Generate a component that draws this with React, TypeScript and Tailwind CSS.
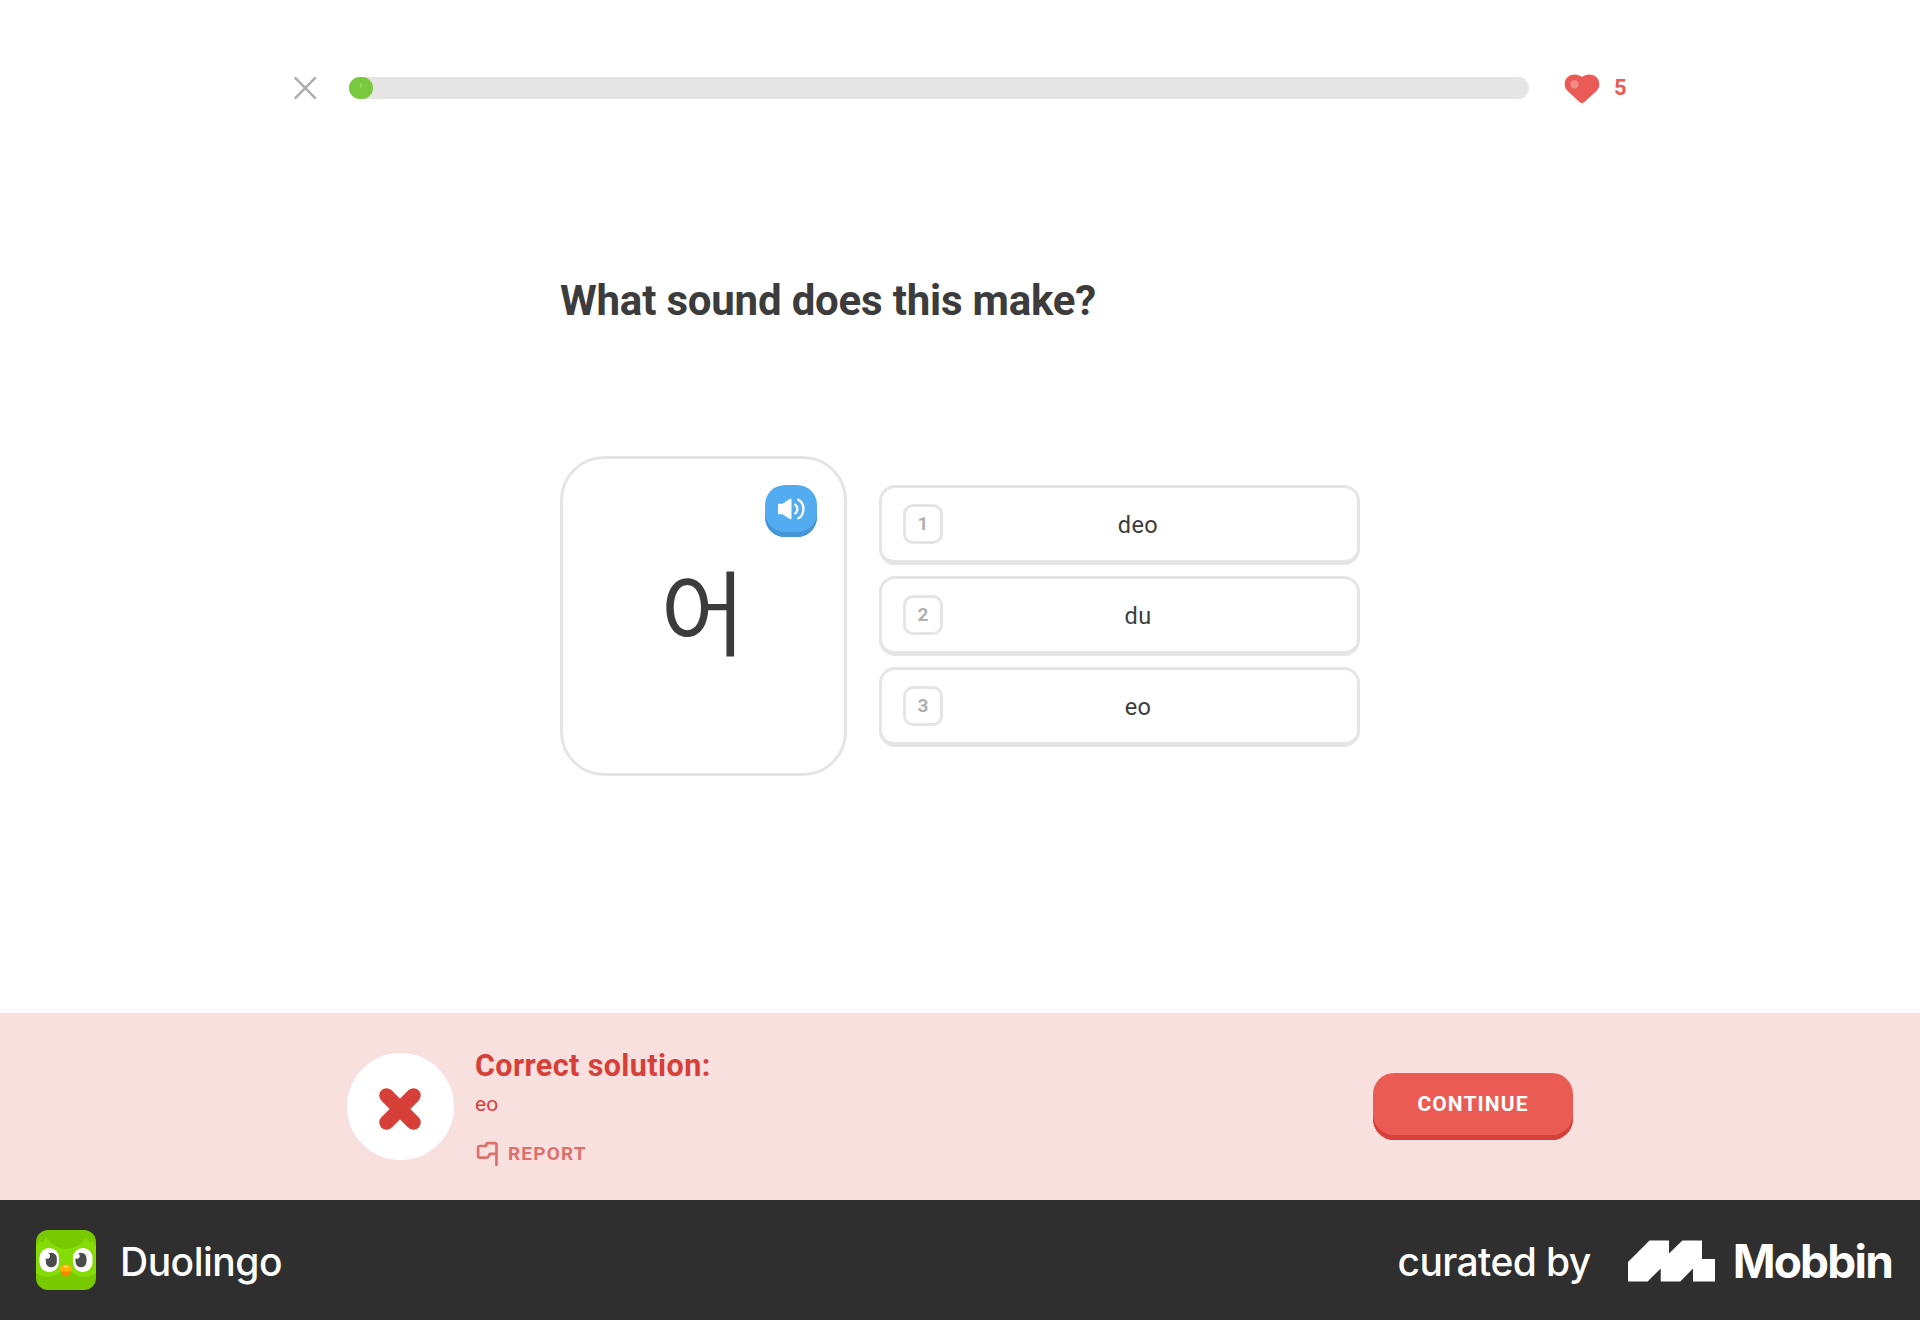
const OPTIONS = ["deo", "du", "eo"];

function CloseIcon() {
  return (
    <svg className="h-6 w-6" viewBox="0 0 24 24" fill="none" stroke="#afafaf" strokeWidth="2.6" strokeLinecap="round">
      <path d="M2.500 2.200 22 21.800M22 2.200 2.500 21.800" />
    </svg>
  );
}

function HeartIcon() {
  return (
    <svg className="mt-px h-[30px] w-9" viewBox="0 0 36 30">
      <path
        fill="#e95b54"
        d="M18 3C20 1.500 22.600.6 25.400.6 31 .6 35.300 4.600 35.300 10.200c0 2.800-1 4.900-2.900 6.700L20.800 27.700c-1.800 1.600-3.800 1.600-5.600 0L3.600 16.900C1.700 15.100.7 13 .7 10.200.7 4.600 5 .6 10.600.6 13.400.6 16 1.500 18 3Z"
      />
      <circle cx="10.400" cy="10.300" r="4.200" fill="#f08b85" />
    </svg>
  );
}

function SpeakerIcon() {
  return (
    <svg className="h-[22px] w-[27px]" viewBox="0 0 27 22" fill="none">
      <path
        fill="#fff"
        d="M1.300 5.700H4.600L11.800.9c.8-.5 1.700 0 1.700.9v18.400c0 .9-.9 1.400-1.700.9L4.600 16.300H1.300C.5 16.300 0 15.800 0 15V7c0-.8.5-1.300 1.300-1.300Z"
      />
      <path
        stroke="#fff"
        strokeWidth="2.300"
        strokeLinecap="round"
        d="M17.300 6.700c2.800 1.800 2.800 6.800 0 8.600M20.300 1.700c6.800 3.500 6.800 15.100 0 18.600"
      />
    </svg>
  );
}

function FlagIcon() {
  return (
    <svg className="h-[26px] w-[23px]" viewBox="0 0 23 26" fill="none" stroke="#dc706a" strokeWidth="2.700" strokeLinecap="round" strokeLinejoin="round">
      <path d="M20.500 24V3.800c0-1-.6-1.600-1.600-1.600H12c-1 0-1.600.5-1.800 1.400L9.900 5H3.700c-1 0-1.600.6-1.600 1.600V15c0 1 .6 1.600 1.600 1.600h7c.8 0 1.300-.3 1.700-1l1.400-2.700h6.700" />
    </svg>
  );
}

function OwlIcon() {
  return (
    <svg className="h-[60px] w-[60px]" viewBox="0 0 60 60">
      <defs>
        <clipPath id="tile">
          <rect width="60" height="60" rx="12" />
        </clipPath>
      </defs>
      <g clipPath="url(#tile)">
        <rect width="60" height="60" fill="#78c900" />
        <path
          fill="#85dc06"
          d="M0 14l2 1 1-5 3 3 4-6c4 6 9 11 20 12C41 18 46 13 50 7l4 6 3-3 1 5 2-1v29c-8 6-19 4-24-1h-12c-5 5-16 7-24 1Z"
        />
        <rect x="3.500" y="18" width="19.500" height="24" rx="9.750" fill="#fff" />
        <rect x="37" y="18" width="19.500" height="24" rx="9.750" fill="#fff" />
        <rect x="9.800" y="22.700" width="11" height="14.600" rx="5.500" fill="#4b4b4b" />
        <rect x="39.500" y="22.700" width="11" height="14.600" rx="5.500" fill="#4b4b4b" />
        <circle cx="11.300" cy="26" r="2.700" fill="#fff" />
        <circle cx="41" cy="26" r="2.700" fill="#fff" />
        <path fill="#f18a00" d="M24.800 40.500h10c0 3.500-2 6-5 6s-5-2.500-5-6Z" />
        <path fill="#ffb100" d="M29.800 34.500c3 0 6.300 2.500 6.300 4.900 0 1.700-2.500 2.100-6.300 2.100s-6.300-.4-6.300-2.100c0-2.400 3.300-4.900 6.300-4.900Z" />
        <ellipse cx="29.800" cy="36.800" rx="2.400" ry="1.400" fill="#ffd24a" />
      </g>
    </svg>
  );
}

function MobbinMark() {
  return (
    <svg className="h-[42px] w-[87px]" viewBox="0 0 87 42" fill="#fff">
      <path d="M0 22 21.500.5H41V13.500L54.400.5H74V19h13v22.500H65V28.500L52.300 41.500H32.700V28.500L19.600 41.500H0Z" />
    </svg>
  );
}

export default function App() {
  return (
    <div className="flex h-[1320px] w-[1920px] flex-col overflow-hidden bg-white font-['Roboto','Noto_Sans_CJK_KR',sans-serif] text-[#3c3c3c]">
      <header className="mt-[72px] flex h-8 items-center pl-[293px]">
        <button className="flex" aria-label="Close">
          <CloseIcon />
        </button>
        <div className="ml-8 h-[22px] w-[1180px] rounded-full bg-[#e5e5e5]">
          <div className="flex h-full w-6 justify-center rounded-full bg-[#79c93f] pt-1.5">
            <div className="h-[5px] w-0.5 rounded-full bg-[#93d564]" />
          </div>
        </div>
        <div className="ml-[35px] flex items-center">
          <HeartIcon />
          <span className="ml-3.5 text-[22px] leading-none font-bold text-[#e95b54]">5</span>
        </div>
      </header>

      <main className="flex h-[909px] flex-col pl-[560px]">
        <h1 className="mt-[173px] h-12 text-[42px] leading-[48px] font-bold tracking-[-0.2px] whitespace-nowrap">
          <span>What sound does this make?</span>
        </h1>

        <div className="mt-[131px] flex items-center gap-8">
          <div className="relative flex h-[320px] w-[287px] items-center justify-center rounded-[44px] border-[3px] border-[#e5e5e5]">
            <span className="mt-0.5 -ml-px text-[93px] leading-none font-normal">어</span>
            <button
              className="absolute top-[26px] right-[27px] flex h-[52px] w-[52px] justify-center rounded-[20px] bg-[#53acf0] pt-[13px] shadow-[inset_0_-5px_0_#4595d9]"
              aria-label="Play sound"
            >
              <SpeakerIcon />
            </button>
          </div>

          <ul className="flex w-[481px] flex-col gap-[11px]">
            {OPTIONS.map((label, i) => (
              <li
                key={label}
                className="flex h-20 items-center rounded-2xl border-[3px] border-b-[5px] border-[#e5e5e5] pr-6 pl-[21px]"
              >
                <span className="flex h-10 w-10 items-center justify-center rounded-[10px] border-[3px] border-[#e5e5e5] text-[19px] font-bold text-[#afafaf]">
                  {i + 1}
                </span>
                <span className="mt-0.5 flex-1 text-center text-[23.5px] leading-8 tracking-[0.4px]">{label}</span>
              </li>
            ))}
          </ul>
        </div>
      </main>

      <section className="flex h-[187px] items-start bg-[#f8e0df] pl-[346.5px]">
        <div className="mt-10 flex h-[107px] w-[107px] items-center justify-center rounded-full bg-white">
          <svg className="mt-1 h-[42px] w-[42px]" viewBox="0 0 42 42" stroke="#d73f39" strokeWidth="14.500" strokeLinecap="round">
            <path d="M7.500 7.500 34.500 34.500M34.500 7.500 7.500 34.500" />
          </svg>
        </div>
        <div className="mt-[35px] ml-[21.5px] flex flex-col items-start text-[#d73f39]">
          <h2 className="h-9 text-[30.5px] leading-9 font-bold tracking-[0.4px] whitespace-nowrap">
            <span>Correct solution:</span>
          </h2>
          <p className="mt-1.5 h-7 text-[21px] leading-7">
            <span>eo</span>
          </p>
          <button className="mt-[23px] ml-px flex h-[26px] items-center text-[#dc706a]">
            <FlagIcon />
            <span className="ml-[9px] text-[19px] leading-6 font-bold tracking-[1.2px]">REPORT</span>
          </button>
        </div>
        <button className="mt-[60px] mr-[347px] ml-auto flex h-[67px] w-[200px] justify-center rounded-[21px] bg-[#ea5b53] pt-[17px] shadow-[inset_0_-5px_0_#d7403a]">
          <span className="text-[21px] leading-7 font-bold tracking-[1.1px] text-white">CONTINUE</span>
        </button>
      </section>

      <footer className="flex h-[120px] items-center bg-[#2f2f2f] pr-[28px] pl-9 font-['Inter',sans-serif] text-white">
        <OwlIcon />
        <span className="mt-[3px] ml-6 text-[39px] leading-none font-medium tracking-[-0.5px]">Duolingo</span>
        <span className="mt-[3px] ml-auto text-[39px] leading-none font-medium tracking-[-0.6px]">curated by</span>
        <span className="mt-0.5 ml-[37px] flex">
          <MobbinMark />
        </span>
        <span className="mt-px ml-[18px] text-[46px] leading-none font-bold tracking-[-1.8px]">Mobbin</span>
      </footer>
    </div>
  );
}
